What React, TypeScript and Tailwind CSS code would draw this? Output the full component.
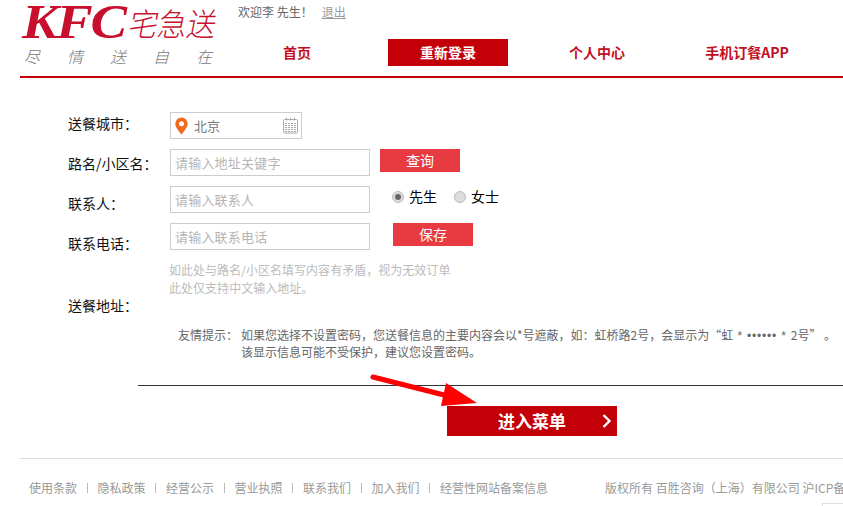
// App.tsx - KFC delivery address page

const cjk = "font-['Microsoft_YaHei','Noto_Sans_CJK_SC','Noto_Sans',sans-serif]"

const navItems = ["首页", "重新登录", "个人中心", "手机订餐APP"]
const labels = ["送餐城市：", "路名/小区名：", "联系人：", "联系电话："]
const footerLinks = ["使用条款", "隐私政策", "经营公示", "营业执照", "联系我们", "加入我们", "经营性网站备案信息"]
const slogan = ["尽", "情", "送", "自", "在"]

function Logo() {
  return (
    <div className="w-[238px] pl-[22px] pt-[1px] shrink-0">
      <div className="flex items-center h-[42px]">
        <span className="font-['Liberation_Serif',serif] font-bold italic text-[48px] leading-none text-[#c8102e] w-[108px] tracking-[-2px] scale-x-[1.14] origin-left">
          KFC
        </span>
        <span className={`${cjk} text-[29px] leading-none text-[#c8102e] -skew-x-12 scale-y-[1.1] font-light`}>宅急送</span>
      </div>
      <div className="flex justify-between w-[190px] pl-[2px] mt-[3px]">
        {slogan.map((c) => (
          <span key={c} className={`${cjk} text-[16px] leading-[20px] text-[#777] italic font-light`}>
            {c}
          </span>
        ))}
      </div>
    </div>
  )
}

function Header() {
  return (
    <div className="flex h-[76px]">
      <Logo />
      <div className="flex-1">
        <div className="flex items-center h-[23px] text-[12px] text-[#666]">
          <span>欢迎李 先生！</span>
          <span className="ml-[9px] text-[#999] underline">退出</span>
        </div>
        <div className="flex gap-[30px] mt-[16px] -ml-[1px]">
          {navItems.map((item, i) => (
            <div
              key={item}
              className={`w-[120px] h-[27px] flex items-center justify-center text-[14px] font-bold ${
                i === 1 ? "bg-[#c30008] text-white" : "text-[#c30d23]"
              } ${i === 1 ? "ml-[1px]" : ""} ${i === 2 ? "-ml-[1px]" : ""}`}
            >
              {item}
            </div>
          ))}
        </div>
      </div>
    </div>
  )
}

function TextField({ placeholder }: { placeholder: string }) {
  return (
    <div className="w-[200px] h-[27px] border border-[#ccc] flex items-center pl-[4px] text-[13px] tracking-[0.2px] text-[#b5b5b5]">
      {placeholder}
    </div>
  )
}

function CityField() {
  return (
    <div className="w-[132px] h-[27px] border border-[#ccc] flex items-center pl-[3px] pr-[2px]">
      <svg width="15" height="18" viewBox="0 0 14 18">
        <path
          fillRule="evenodd"
          fill="#f26a21"
          d="M7 0.5a6.2 6.2 0 0 0-6.2 6.2C.8 10.6 5 14.6 7 17.5c2-2.9 6.2-6.9 6.2-10.8A6.2 6.2 0 0 0 7 .5Zm0 3.8a2.5 2.5 0 1 1 0 5 2.5 2.5 0 0 1 0-5Z"
        />
      </svg>
      <span className="ml-[5px] text-[13px] text-[#777]">北京</span>
      <svg className="ml-auto" width="17" height="17" viewBox="0 0 17 17" fill="none" stroke="#aaa">
        <rect x="1.5" y="2.5" width="14" height="13.5" rx="1" />
        <path d="M4.5 .5v3M8.5 .5v3M12.5 .5v3" />
        <path d="M3 6.5h11M3 8.5h11M3 10.5h11M3 12.5h11M3 14.5h11" strokeDasharray="2 1" />
      </svg>
    </div>
  )
}

function RedButton({ children, className }: { children: string; className: string }) {
  return (
    <div className={`w-[80px] h-[23px] bg-[#e73a41] text-white text-[14px] flex items-center justify-center ${className}`}>
      {children}
    </div>
  )
}

function Radio({ label, checked }: { label: string; checked?: boolean }) {
  return (
    <div className="flex items-center text-[14px] text-black">
      <span className="w-[12px] h-[12px] rounded-full bg-[#ddd] border border-[#bbb] flex items-center justify-center">
        {checked && <span className="w-[6px] h-[6px] rounded-full bg-[#666]" />}
      </span>
      <span className="ml-[5px]">{label}</span>
    </div>
  )
}

function AddressForm() {
  return (
    <div className="flex pl-[68px]">
      <div className="w-[102px] shrink-0 pt-[25px] text-[14px] text-[#111]">
        {labels.map((label) => (
          <div key={label} className="h-[40px] flex items-center whitespace-nowrap">
            {label}
          </div>
        ))}
        <div className="mt-[22px] h-[40px] flex items-center whitespace-nowrap">送餐地址：</div>
      </div>
      <div className="pt-[34px] flex-1">
        <div className="flex flex-col gap-[10px]">
          <CityField />
          <div className="flex items-start">
            <TextField placeholder="请输入地址关键字" />
            <RedButton className="ml-[10px]">查询</RedButton>
          </div>
          <div className="flex items-center">
            <TextField placeholder="请输入联系人" />
            <div className="flex gap-[17px] ml-[22px] -mt-[6px]">
              <Radio label="先生" checked />
              <Radio label="女士" />
            </div>
          </div>
          <div className="flex items-start">
            <TextField placeholder="请输入联系电话" />
            <RedButton className="ml-[23px]">保存</RedButton>
          </div>
        </div>
        <div className="mt-[11px] -ml-[1px] text-[12px] leading-[18px] tracking-[0.03px] text-[#bbb]">
          <p>如此处与路名/小区名填写内容有矛盾，视为无效订单</p>
          <p>此处仅支持中文输入地址。</p>
        </div>
      </div>
    </div>
  )
}

function Tip() {
  return (
    <div className="flex mt-[2px] pl-[178px] text-[12px] leading-[16px] text-[#666] whitespace-nowrap">
      <span className="w-[63px] shrink-0">友情提示：</span>
      <div>
        <p>
          如果您选择不设置密码，您送餐信息的主要内容会以*号遮蔽，如：虹桥路2号，会显示为“虹
          <span className="font-['Liberation_Sans',sans-serif] tracking-[0.8px]"> * •••••• * </span>
          2号” 。
        </p>
        <p>该显示信息可能不受保护，建议您设置密码。</p>
      </div>
    </div>
  )
}

function Footer() {
  return (
    <div className="mt-[22px] ml-[20px] border-t border-[#ddd] pt-[20px] pl-[9px] flex items-center text-[12px] leading-[18px] text-[#999] whitespace-nowrap">
      {footerLinks.map((link, i) => (
        <span key={link} className="flex items-center">
          {i > 0 && <span className="mx-[9.75px] w-[1px] h-[10px] bg-[#bbb]" />}
          {link}
        </span>
      ))}
      <span className="ml-[57px]">版权所有 百胜咨询（上海）有限公司 沪ICP备</span>
    </div>
  )
}

export default function App() {
  return (
    <div className={`relative w-[843px] h-[506px] overflow-hidden bg-white ${cjk}`}>
      <Header />
      <div className="ml-[20px] h-[2px] bg-[#c30008]" />
      <AddressForm />
      <Tip />
      <div className="mt-[25px] ml-[138px] h-[1px] bg-[#333]" />
      <div className="mt-[20px] ml-[447px] w-[170px] h-[30px] bg-[#c30008] relative flex items-center justify-center text-white text-[17px] font-bold">
        进入菜单
        <svg className="absolute right-[5px] top-[8px]" width="10" height="14" viewBox="0 0 10 14" fill="none" stroke="white" strokeWidth="2.4">
          <path d="M1.5 1l6 6-6 6" />
        </svg>
      </div>
      <Footer />
      {/* annotation arrow drawn over the page */}
      <svg className="absolute left-[368px] top-[370px]" width="112" height="37" viewBox="0 0 112 37">
        <path d="M5 7L76 25" stroke="#f00" strokeWidth="5" strokeLinecap="round" fill="none" />
        <path d="M78 13L109 33L73 36Z" fill="#f00" />
      </svg>
      <div className="absolute left-[822px] top-[503px] w-[40px] h-[10px] border border-[#ddd]" />
    </div>
  )
}
